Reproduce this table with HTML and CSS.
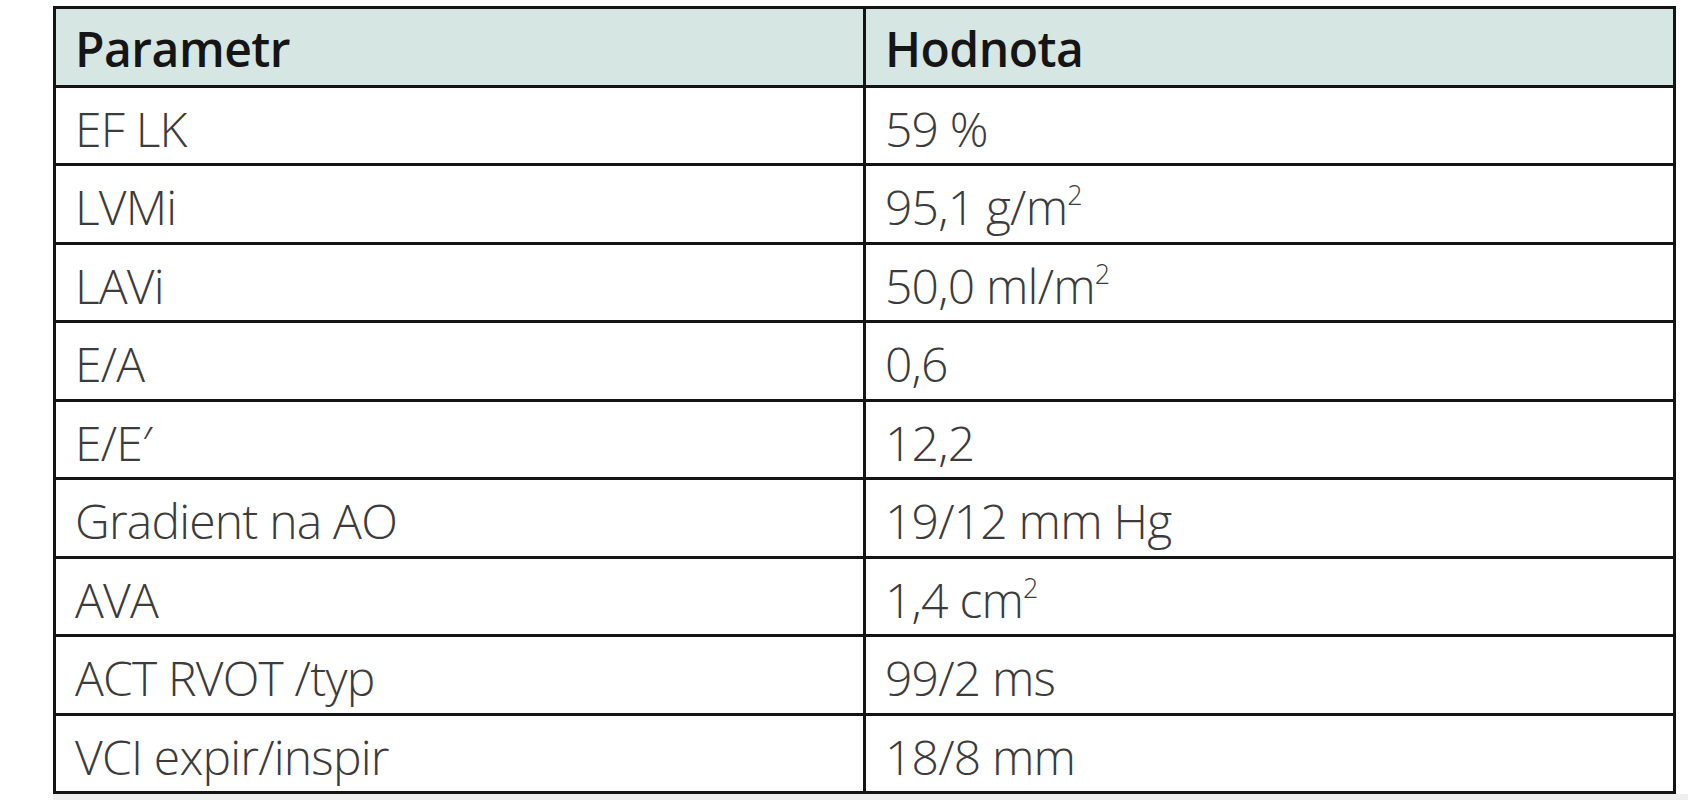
FILE: index.html
```html
<!DOCTYPE html>
<html lang="cs">
<head>
<meta charset="utf-8">
<title>Parametr / Hodnota</title>
<link rel="stylesheet" href="styles.css">
</head>
<body>
<div class="page">
  <table class="data">
    <thead>
      <tr><th>Parametr</th><th>Hodnota</th></tr>
    </thead>
    <tbody>
      <tr><td>EF LK</td><td>59 %</td></tr>
      <tr><td>LVMi</td><td>95,1 g/m<sup>2</sup></td></tr>
      <tr><td>LAVi</td><td>50,0 ml/m<sup>2</sup></td></tr>
      <tr><td>E/A</td><td>0,6</td></tr>
      <tr><td>E/E′</td><td>12,2</td></tr>
      <tr><td>Gradient na AO</td><td>19/12 mm Hg</td></tr>
      <tr><td>AVA</td><td>1,4 cm<sup>2</sup></td></tr>
      <tr><td>ACT RVOT /typ</td><td>99/2 ms</td></tr>
      <tr><td>VCI expir/inspir</td><td>18/8 mm</td></tr>
    </tbody>
  </table>
  <div class="strip"></div>
</div>
</body>
</html>
```

FILE: styles.css
```css
html, body {
  margin: 0;
  padding: 0;
  background: #ffffff;
}

.page {
  width: 1688px;
  height: 800px;
  padding-top: 6px;
  box-sizing: border-box;
  overflow: hidden;
}

.data {
  margin-left: 53px;
  width: 1623px;
  border-collapse: collapse;
  table-layout: fixed;
  font-family: "Open Sans", "Liberation Sans", sans-serif;
}

.data th,
.data td {
  border: 3px solid #141414;
  text-align: left;
  vertical-align: top;
  padding: 10px 0 0 19px;
  height: 65.5px;
  font-size: 48px;
  letter-spacing: -0.8px;
  line-height: 62px;
  white-space: nowrap;
}

.data th {
  background: #d6e6e2;
  color: #151515;
  font-weight: 600;
  letter-spacing: -0.5px;
  padding-top: 9px;
  height: 66.5px;
}

.data td {
  color: #3c3c3c;
  font-weight: 300;
}

.data sup {
  font-size: 0.56em;
  line-height: 0;
  vertical-align: 0.74em;
}

.strip {
  margin-left: 53px;
  height: 10px;
  background: #efefef;
}
```
